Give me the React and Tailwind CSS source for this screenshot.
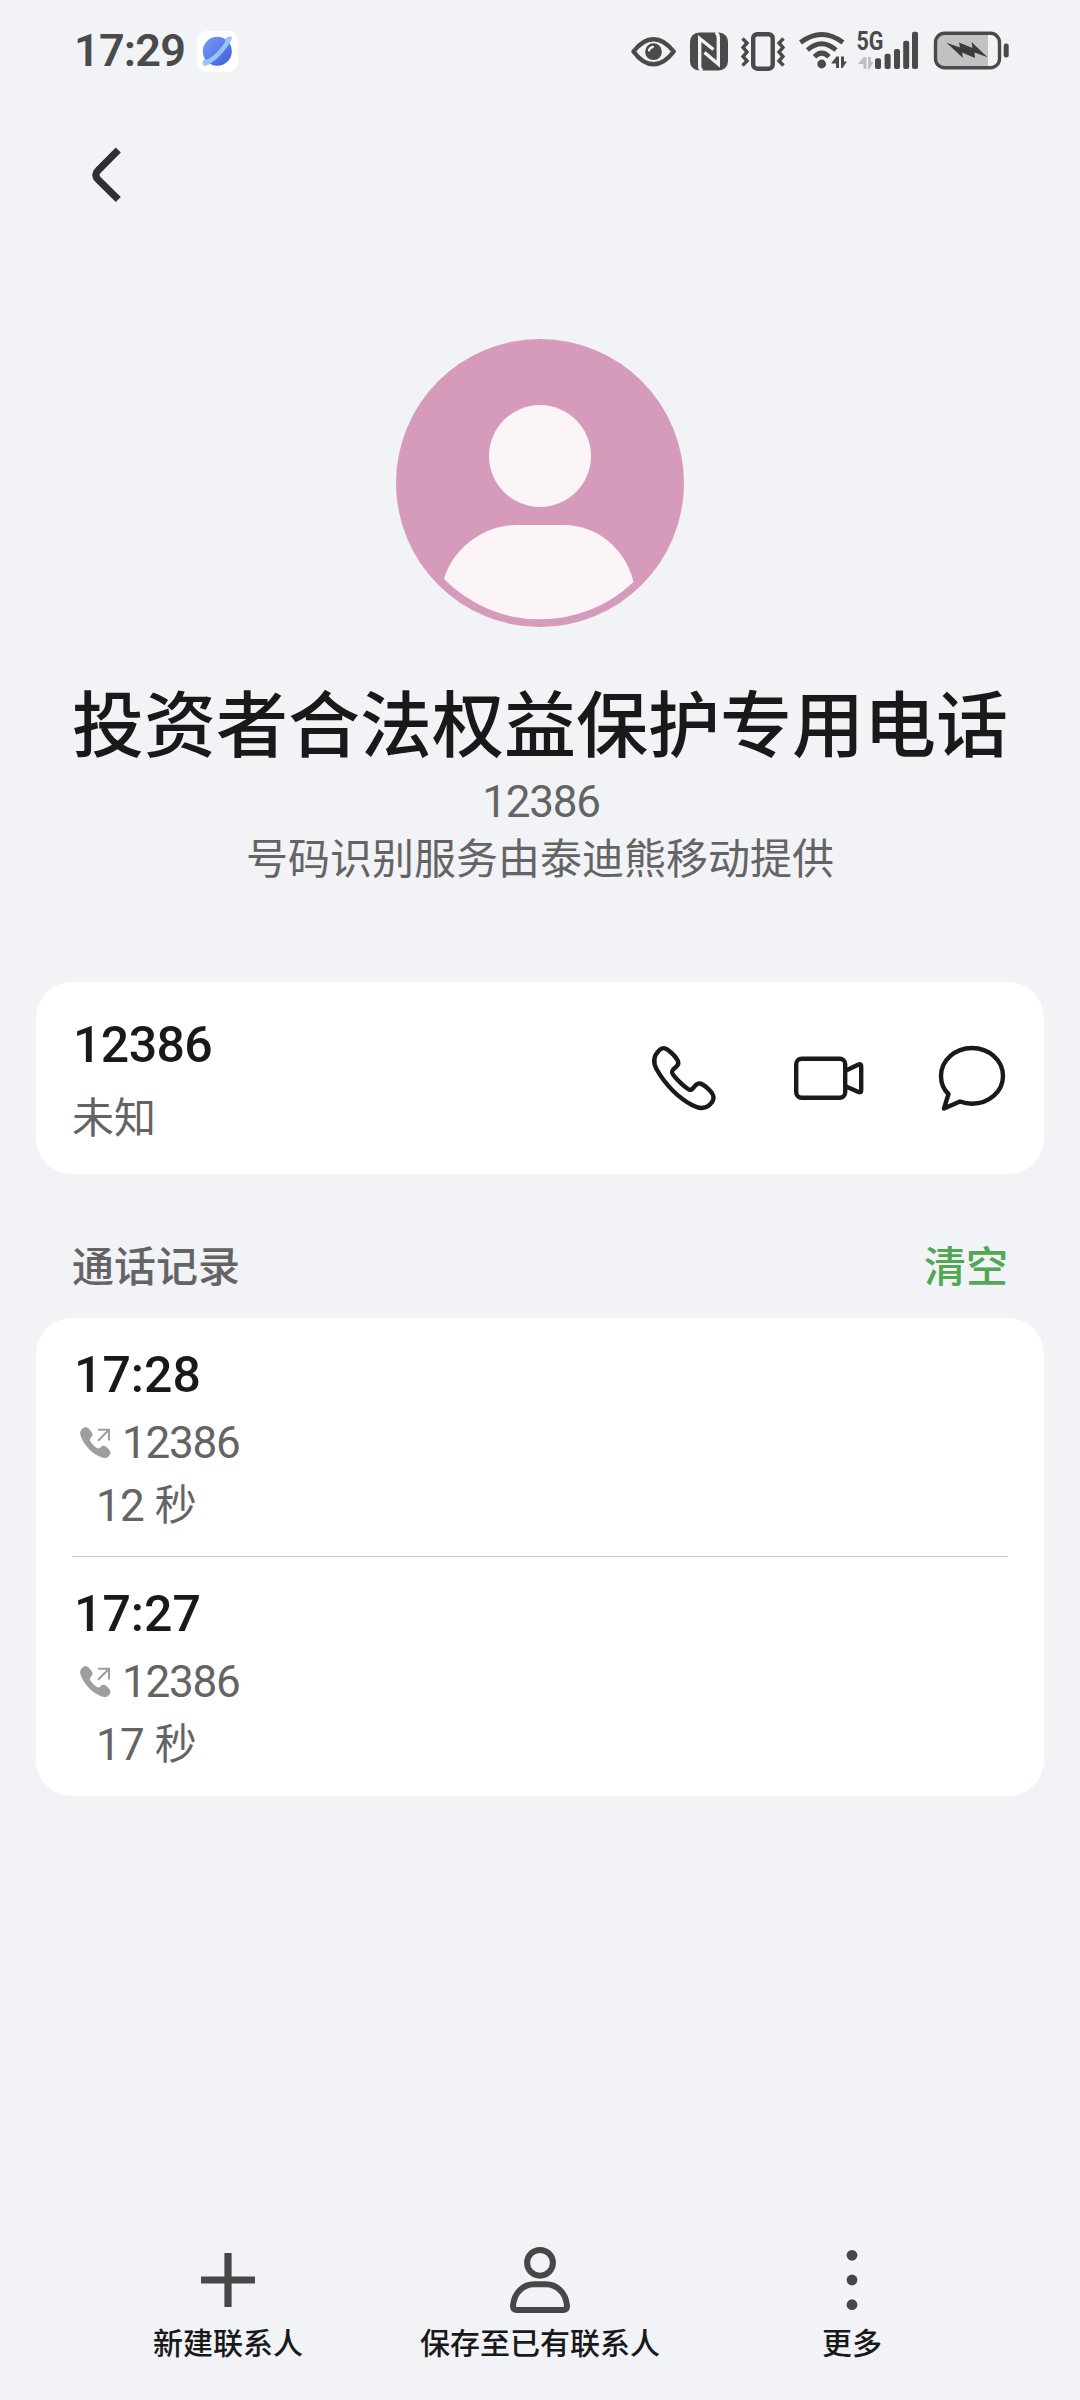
import React from "react";

const calls = [
  { id: 1, time: "17:28", number: "12386", duration: "12", unit: "秒" },
  { id: 2, time: "17:27", number: "12386", duration: "17", unit: "秒" },
];

const BrowserBadge = () => (
  <svg width="41" height="41" viewBox="0 0 41 41">
    <defs>
      <linearGradient id="planet" x1="0" y1="0" x2="1" y2="1">
        <stop offset="0" stopColor="#7b9bf5" />
        <stop offset="0.5" stopColor="#5b7dea" />
        <stop offset="1" stopColor="#3c5cd8" />
      </linearGradient>
    </defs>
    <rect width="41" height="41" rx="10" fill="#fff" />
    <circle cx="20.3" cy="20.3" r="14.5" fill="url(#planet)" />
    <path
      d="M28 8C30.5 5.5 34 4.5 34.7 6.5C35.5 9.5 29 18.5 22 25.5C15.5 32 8 36.500 6 34C4.8 32.3 6 29.500 8 27.5C9 30 13 27.5 18.5 22.5C25 16.5 29.5 10 28 8Z"
      fill="#93c4fa"
    />
  </svg>
);

const EyeIcon = () => (
  <svg width="45" height="42" viewBox="0 0 45 42" fill="none">
    <path
      d="M2.5 21.5C9 13 15.5 9.3 22.5 9.3S36 13 42.7 21.5C36 30.5 29.5 34.3 22.5 34.3S9 30.5 2.5 21.5Z"
      stroke="#4a4a4a"
      strokeWidth="4.4"
      strokeLinejoin="round"
    />
    <circle cx="22.5" cy="21.7" r="8.4" fill="#4a4a4a" />
    <path d="M18 20.5Q18.7 17.5 22 16.8" stroke="#f1f3f7" strokeWidth="2.2" strokeLinecap="round" />
  </svg>
);

const NfcIcon = () => (
  <svg width="38" height="42" viewBox="0 0 38 42" fill="none">
    <rect y="2.5" width="38" height="38" rx="9" fill="#4a4a4a" />
    <path
      d="M12.5 40.5C9.7 39.5 9.7 38 9.7 35V8.500L23.5 19.5"
      stroke="#f1f3f7"
      strokeWidth="3.4"
    />
    <path
      d="M25.5 2.5C28 3.5 28.3 5 28.300 8V34L14.5 22.5"
      stroke="#f1f3f7"
      strokeWidth="3.4"
    />
  </svg>
);

const VibrateIcon = () => (
  <svg width="44" height="42" viewBox="0 0 44 42" fill="none" stroke="#4a4a4a">
    <rect x="12.2" y="4.2" width="19.5" height="34.5" rx="4" strokeWidth="4.4" />
    <path
      d="M1.5 8.5L6 13L2 17.5L6 22L2 26.5L6 31L1.5 35.5M42.5 8.5L38 13L42 17.5L38 22L42 26.5L38 31L42.5 35.5"
      strokeWidth="3.4"
    />
  </svg>
);

const WifiIcon = () => (
  <svg width="50" height="42" viewBox="0 0 50 42" fill="none">
    <g stroke="#4a4a4a" strokeWidth="4.8">
      <path d="M2.5 12.5Q23.7 -3.5 45 12.5" />
      <path d="M9.5 20Q23.7 7.5 38 20" />
      <path d="M16.5 26.7Q23.7 19.5 31 26.7" />
    </g>
    <circle cx="23.7" cy="34" r="4.4" fill="#4a4a4a" />
    <path d="M33 33.5L38.5 26.5H41V38H38V33.5ZM43 26.5H46V31.5H49L44.5 38H43Z" fill="#4a4a4a" />
  </svg>
);

const SignalIcon = () => (
  <svg width="64" height="42" viewBox="0 0 64 42" fill="#4a4a4a" className="overflow-visible">
    <text
      x="0.5"
      y="20"
      fontSize="25"
      fontWeight="700"
      textLength="27"
      lengthAdjust="spacingAndGlyphs"
    >
      5G
    </text>
    <path d="M1.5 34L8 27H10.5V39H7.5V34ZM12 27H15V32H17.5L13.5 39H12Z" fill="#c0c0c0" />
    <rect x="19" y="28.3" width="6" height="10.7" rx="2" />
    <rect x="28.6" y="23.7" width="6" height="15.3" rx="2" />
    <rect x="38" y="19" width="6" height="20" rx="2" />
    <rect x="47.2" y="10.7" width="6" height="28.3" rx="2" />
    <rect x="56" y="1.7" width="6" height="37.3" rx="2" />
  </svg>
);

const BatteryIcon = () => (
  <svg width="77" height="42" viewBox="0 0 77 42">
    <path d="M12 3H55V38H12Q3 38 3 29V12Q3 3 12 3Z" fill="#c2c2c4" />
    <rect x="2.5" y="3.3" width="64" height="34.5" rx="9" fill="none" stroke="#4a4a4a" strokeWidth="3.400" />
    <rect x="70.7" y="13.5" width="5" height="14" rx="2.3" fill="#4a4a4a" />
    <path d="M13.5 12.800L27 17.500L26 12.500L39.500 18L38.500 12L54.5 27.300L41.500 22.500L42 28L29 22.500L30 28Z" fill="#3c3c3c" />
  </svg>
);

const StatusBar = () => (
  <div className="flex h-[102px] items-center justify-between pr-[70px] pl-[74px]">
    <div className="flex items-center">
      <span className="w-[123px] text-[45px] leading-[56px] font-semibold tracking-[-0.8px] text-[#4a4a4a]">17:29</span>
      <BrowserBadge />
    </div>
    <div className="flex items-center">
      <EyeIcon />
      <span className="w-3.5" />
      <NfcIcon />
      <span className="w-[13px]" />
      <VibrateIcon />
      <span className="w-[13px]" />
      <WifiIcon />
      <span className="w-2" />
      <SignalIcon />
      <span className="w-[13px]" />
      <BatteryIcon />
    </div>
  </div>
);

const Avatar = () => (
  <svg width="288" height="288" viewBox="0 0 288 288" className="mx-auto mt-[93px]">
    <circle cx="144" cy="144" r="144" fill="#d69abb" />
    <circle cx="144" cy="117" r="51" fill="#fbf5f8" />
    <path
      d="M48 240C57 209 88 186 121 186H168C202 186 230 211 237.5 243A135 135 0 0 1 48 240Z"
      fill="#fbf5f8"
    />
  </svg>
);

const PhoneIcon = () => (
  <svg width="72" height="72" viewBox="0 0 72 72" fill="none" stroke="#1a1a1a" strokeWidth="4.4" strokeLinejoin="round">
    <path d="M11 8.5C14 5.3 16.5 5.3 20 8C24 11 27.5 14.5 29.5 18C31 20.5 30.5 22.5 28.5 24.5C26.5 26.5 24 27.5 24 30C24 33 34.5 43.5 40 47C43 49 44.5 47 46.5 44.5C49 41.5 51 40.5 54.5 42.5C58 44.5 63.5 49.5 65 53C66.5 56.5 65 59.5 62 62.5C57.5 67 52 67 45 63.5C31 56.5 17 42.5 8.5 27C4.5 19.5 5.5 14 11 8.5Z" />
  </svg>
);

const VideoIcon = () => (
  <svg width="72" height="72" viewBox="0 0 72 72" fill="none" stroke="#1a1a1a" strokeWidth="4.4" strokeLinejoin="round">
    <rect x="4.2" y="16.7" width="49" height="39" rx="5.5" />
    <path d="M54 28.5L66.500 22.5Q69.200 21.500 69.200 24V48.500Q69.200 51 66.500 50L54 44.5" />
  </svg>
);

const MessageIcon = () => (
  <svg width="72" height="72" viewBox="0 0 72 72" fill="none" stroke="#1a1a1a" strokeWidth="4.4" strokeLinejoin="round">
    <path d="M12.5 52C7 47 5 41 5 34C5 18.500 19 6 36 6S67 18.5 67 34S53 61.7 36 61.7C31.5 61.7 28 61 24 59.5L8 66.5Z" />
  </svg>
);

const OutgoingIcon = () => (
  <svg width="34" height="34" viewBox="0 0 34 34">
    <path
      d="M3.5 2.5C5.5 0.5 7.5 0.5 9.5 2.5C12 5 13.8 7.2 13.5 9C13.2 11.5 10.5 12 11 14.5C11.8 17 16 21 18.500 22.3C20.5 23.3 22 20 24 19.7C26.5 19.5 29.5 22.5 31 25C32 27 31.5 28.5 29.5 30.5C27.500 32.5 25 32.5 21.5 31C12.5 27 5.5 19.5 2 11C0.500 7 1 5 3.5 2.5Z"
      fill="#9e9e9e"
    />
    <path d="M19 3.8H30V14.5M29.5 4.2L19 14.7" fill="none" stroke="#9e9e9e" strokeWidth="2" />
  </svg>
);

const CallRow = ({ call, last }) => (
  <div className="relative h-[239px] pt-[29px] text-[44px] leading-[56px] text-[#646464]">
    <p className="pl-0.5 text-[50px] font-medium text-[#191919]">{call.time}</p>
    <div className="mt-3 flex items-center pl-[7px]">
      <OutgoingIcon />
      <span className="pl-[9px] tracking-[-1.2px]">{call.number}</span>
    </div>
    <div className="mt-[7px] flex pl-6">
      <span className="tracking-[-0.8px]">{call.duration}</span>
      <span className="pl-[11px] text-[42px]">{call.unit}</span>
    </div>
    {!last && <div className="absolute inset-x-0 bottom-0 h-px bg-[#c8c8c8]" />}
  </div>
);

const BottomAction = ({ label, children }) => (
  <button className="flex flex-1 flex-col items-center">
    <svg width="72" height="72" viewBox="0 0 72 72" fill="none">
      {children}
    </svg>
    <span className="mt-[6px] text-[30px] leading-[44px] font-medium whitespace-nowrap text-[#191919]">{label}</span>
  </button>
);

const App = () => {
  return (
    <div className="flex h-[2400px] w-[1080px] flex-col overflow-hidden bg-[#f1f3f7] font-['Roboto','Noto_Sans_CJK_SC',sans-serif]">
      <StatusBar />

      <header className="flex h-[144px] items-center pl-[90px]">
        <svg width="34" height="60" viewBox="0 0 34 60" fill="none">
          <path
            d="M28.300 6L8 26.500Q3.5 31 8 35.500L28.300 55.5"
            stroke="#2f3131"
            strokeWidth="7.2"
          />
        </svg>
      </header>

      <Avatar />
      <h1 className="mt-[60px] text-center text-[72px] leading-[80px] font-medium whitespace-nowrap text-[#191919]">
        投资者合法权益保护专用电话
      </h1>
      <p className="mt-[7px] pl-0.5 text-center text-[44px] leading-[56px] tracking-[-1.2px] text-[#646464]">12386</p>
      <p className="mt-0.5 text-center text-[42px] leading-[56px] text-[#646464]">号码识别服务由泰迪熊移动提供</p>

      {/* number card */}
      <section className="mx-9 mt-[94px] flex h-[192px] justify-between rounded-[36px] bg-white px-9">
        <div className="pt-[31px]">
          <p className="pl-px text-[50px] leading-[64px] font-medium tracking-[-0.6px] text-[#191919]">12386</p>
          <p className="mt-3 text-[42px] leading-[60px] text-[#646464]">未知</p>
        </div>
        <div className="flex items-center gap-[72px]">
          <PhoneIcon />
          <VideoIcon />
          <MessageIcon />
        </div>
      </section>

      {/* call log */}
      <div className="flex h-[144px] items-end justify-between px-[72px] pb-[22px] text-[42px] leading-[56px] font-medium">
        <h2 className="text-[#646464]">通话记录</h2>
        <button className="text-[#52a654]">清空</button>
      </div>
      <section className="mx-9 rounded-[36px] bg-white px-9">
        {calls.map((call, i) => (
          <CallRow key={call.id} call={call} last={i === calls.length - 1} />
        ))}
      </section>

      <nav className="mt-auto flex h-[156px] px-[72px]">
        <BottomAction label="新建联系人">
          <path d="M36 9V63M9 36H63" stroke="#464848" strokeWidth="7.2" />
        </BottomAction>
        <BottomAction label="保存至已有联系人">
          <g stroke="#464848" strokeWidth="6">
            <circle cx="36" cy="18.8" r="12.9" />
            <path d="M13 66Q9 66 9 62C10 48 20 40.3 30 40.3H42C52 40.3 62 48 63 62Q63 66 59 66Z" />
          </g>
        </BottomAction>
        <BottomAction label="更多">
          <g fill="#464848">
            <circle cx="36" cy="11.3" r="5.4" />
            <circle cx="36" cy="36" r="5.4" />
            <circle cx="36" cy="60.7" r="5.4" />
          </g>
        </BottomAction>
      </nav>
    </div>
  );
};

export default App;
